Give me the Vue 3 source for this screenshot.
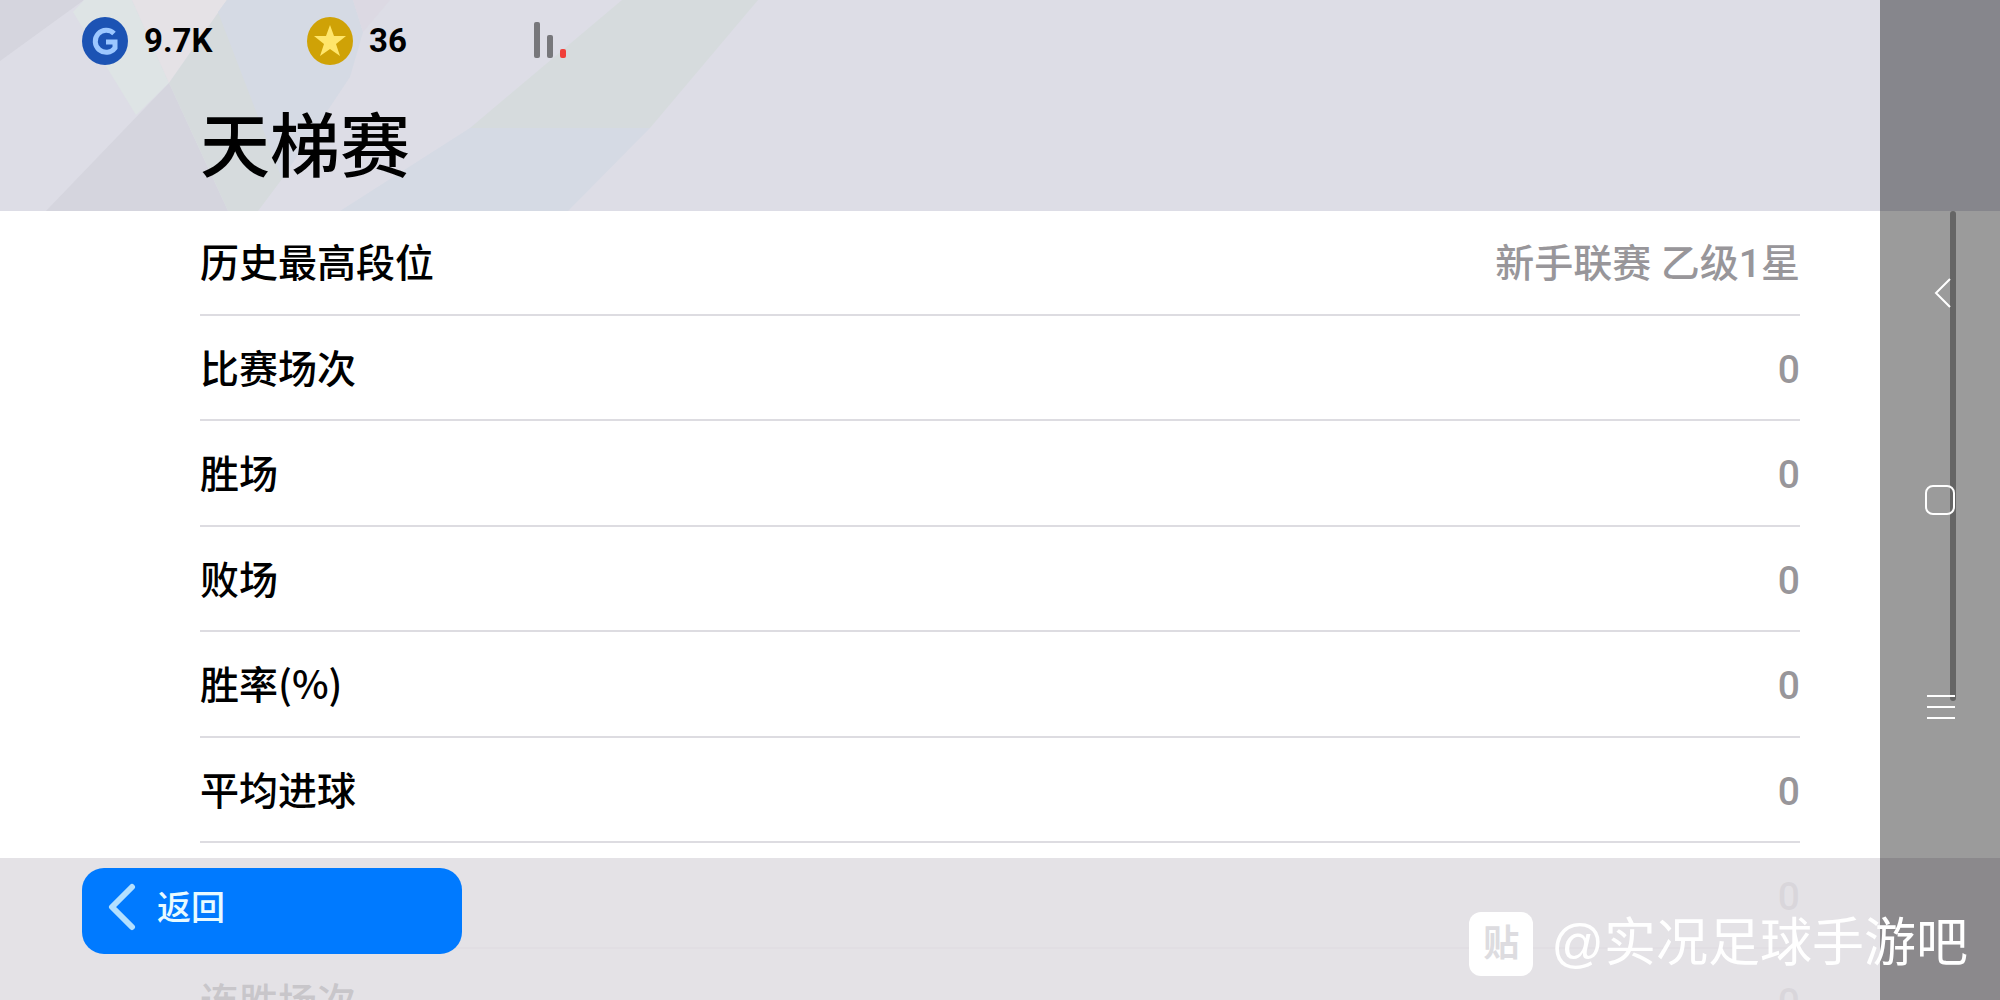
<script setup>
const rows = [
  { label: '历史最高段位', value: '新手联赛 乙级1星' },
  { label: '比赛场次', value: '0' },
  { label: '胜场', value: '0' },
  { label: '败场', value: '0' },
  { label: '胜率(%)', value: '0' },
  { label: '平均进球', value: '0' },
  { label: '', value: '0' },
  { label: '连胜场次', value: '0' }
]
</script>

<template>
  <div class="screen">
    <header class="top">
      <svg class="facets" width="780" height="211" viewBox="0 0 780 211" aria-hidden="true">
        <path fill="#d5d5de" d="M0 0H84L0 61z" />
        <path fill="#dee4e5" d="M73 12L84 0H132L169 83L136 115z" />
        <path fill="#e5e2e6" d="M132 0H227L169 83z" />
        <path fill="#d5d5de" d="M46 211L169 83L228 211z" />
        <path fill="#d6dbdd" d="M227 0L169 83L228 211H258L282 179z" />
        <path fill="#d5dae4" d="M227 0H353L363 32L350 77L282 179L218 12z" />
        <path fill="#dcd9e3" d="M353 0H390L363 32z" />
        <path fill="#d6dbdd" d="M622 0H758L650 128H470z" />
        <path fill="#d5dae4" d="M470 128H650L568 211H340z" />
      </svg>
      <div class="stats">
        <div class="stat">
          <svg width="46" height="48" viewBox="0 0 46 48" aria-hidden="true">
            <ellipse cx="23" cy="24" rx="23" ry="24" fill="#1c53b4" />
            <path d="M32 16.500A11 11 0 1 0 33 31V25H24" fill="none" stroke="#9cc7ff" stroke-width="5" />
          </svg>
          <span>9.7K</span>
        </div>
        <div class="stat">
          <svg width="46" height="48" viewBox="0 0 46 48" aria-hidden="true">
            <ellipse cx="23" cy="24" rx="23" ry="24" fill="#cfa206" />
            <path d="M23 8L27 19H39L29 27L33 39L23 32L13 39L17 27L7 19H19z" fill="#ffe66b" />
          </svg>
          <span>36</span>
        </div>
        <svg class="signal" width="32" height="36" viewBox="0 0 32 36" aria-hidden="true">
          <rect width="6" height="36" rx="2" fill="#77777b" />
          <rect x="13" y="13" width="6" height="23" rx="2" fill="#77777b" />
          <rect x="26" y="27" width="6" height="9" rx="2" fill="#f0403a" />
        </svg>
      </div>
      <h1>天梯赛</h1>
    </header>

    <main>
      <table>
        <tbody>
          <tr v-for="(row, i) in rows" :key="i">
            <th scope="row">{{ row.label }}</th>
            <td>{{ row.value }}</td>
          </tr>
        </tbody>
      </table>
    </main>

    <footer>
      <button type="button" class="back">
        <svg width="28" height="48" viewBox="0 0 28 48" aria-hidden="true">
          <path d="M24 4L4 24L24 44" fill="none" stroke="#b3e0ff" stroke-width="6" stroke-linecap="round" stroke-linejoin="round" />
        </svg>
        <span>返回</span>
      </button>
    </footer>

    <div class="scrollbar"></div>
    <nav class="system">
      <button type="button" aria-label="Back">
        <svg width="32" height="32" viewBox="0 0 32 32"><path d="M26 2L12 16L26 30" /></svg>
      </button>
      <button type="button" aria-label="Home">
        <svg width="32" height="32" viewBox="0 0 32 32"><rect x="2" y="2" width="28" height="28" rx="7" /></svg>
      </button>
      <button type="button" aria-label="Menu">
        <svg width="32" height="32" viewBox="0 0 32 32"><path d="M3 5H31M3 16H31M3 27H31" /></svg>
      </button>
    </nav>

    <div class="watermark">
      <span class="badge">贴</span>
      <span class="handle">@实况足球手游吧</span>
    </div>
  </div>
</template>

<style>
body {
  margin: 0;
}
</style>

<style scoped>
.screen {
  position: relative;
  display: flex;
  flex-direction: column;
  height: 100vh;
  overflow: hidden;
  background: #fff;
  color: #000;
  font-family: Roboto, "Noto Sans CJK SC", sans-serif;
}

.top {
  position: relative;
  z-index: 1;
  flex: none;
  box-sizing: border-box;
  height: 211px;
  padding: 17px 0 0 82px;
  background: #dddde6;
}

.facets {
  position: absolute;
  top: 0;
  left: 0;
}

.stats {
  position: relative;
  display: flex;
  align-items: center;
  height: 48px;
}

.stat {
  display: flex;
  align-items: center;
  gap: 16px;
  width: 225px;
  font-size: 33px;
  line-height: 48px;
  font-weight: 700;
}

.signal {
  margin: 0 0 2px 2px;
}

h1 {
  position: relative;
  margin: 29px 0 0 118px;
  font-family: "Noto Sans CJK SC", sans-serif;
  font-size: 70px;
  line-height: 96px;
  font-weight: 500;
}

main {
  flex: 1;
  min-height: 0;
  padding: 0 200px;
  overflow: hidden;
}

table {
  width: 100%;
  margin-top: -1px;
  border-collapse: separate;
  border-spacing: 0;
  font-size: 39px;
  line-height: 56px;
}

th,
td {
  box-sizing: border-box;
  height: 106px;
  border-bottom: 2px solid #dddce1;
  font-weight: 500;
}

tr:nth-child(even) > * {
  height: 105px;
}

th {
  padding: 0 0 4px;
  text-align: left;
  font-family: "Noto Sans CJK SC", sans-serif;
}

td {
  padding: 4px 0 0;
  text-align: right;
  color: #98969a;
}

footer {
  position: absolute;
  z-index: 2;
  left: 0;
  right: 0;
  bottom: 0;
  box-sizing: border-box;
  height: 142px;
  padding: 10px 82px;
  background: rgba(225, 222, 227, 0.89);
}

.back {
  display: flex;
  align-items: center;
  gap: 21px;
  box-sizing: border-box;
  width: 380px;
  height: 86px;
  padding: 0 26px 8px;
  border: 0;
  border-radius: 22px;
  background: #007aff;
  color: #e8faff;
  font-family: "Noto Sans CJK SC", sans-serif;
  font-size: 34px;
  line-height: 48px;
  font-weight: 500;
}

.back span {
  padding-bottom: 2px;
}

.scrollbar {
  position: absolute;
  z-index: 3;
  top: 211px;
  right: 44px;
  width: 6px;
  height: 490px;
  border-radius: 3px;
  background: #a6a6a6;
}

.system {
  position: absolute;
  z-index: 4;
  top: 0;
  right: 0;
  bottom: 0;
  display: flex;
  flex-direction: column;
  align-items: center;
  justify-content: center;
  gap: 175px;
  width: 120px;
  background: rgba(6, 4, 6, 0.4);
}

.system button {
  display: flex;
  padding: 0;
  border: 0;
  background: none;
}

.system svg {
  fill: none;
  stroke: #fff;
  stroke-width: 2;
}

.watermark {
  position: absolute;
  z-index: 5;
  right: 32px;
  bottom: 24px;
  display: flex;
  align-items: center;
  gap: 18px;
  color: #fff;
  font-family: "Liberation Sans", "Noto Sans CJK SC", sans-serif;
  font-size: 52px;
  line-height: 60px;
  font-weight: 400;
}

.handle {
  padding-bottom: 2px;
}

.badge {
  width: 64px;
  height: 64px;
  border-radius: 12px;
  background: #fff;
  color: #dddce0;
  font-size: 36px;
  line-height: 64px;
  font-weight: 700;
  text-align: center;
}
</style>
